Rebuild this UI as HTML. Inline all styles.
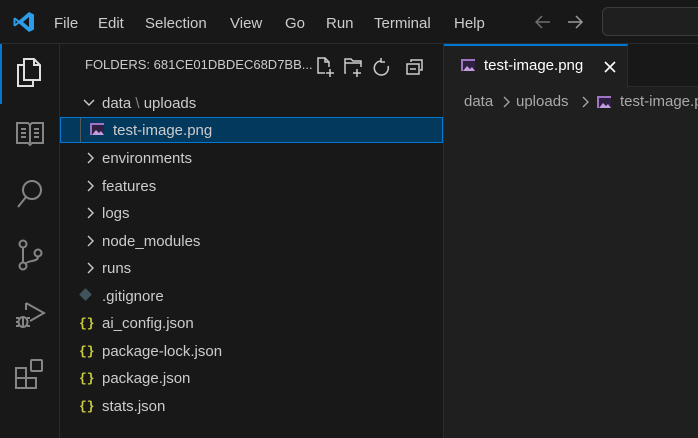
<!DOCTYPE html>
<html><head><meta charset="utf-8"><style>
*{margin:0;padding:0;box-sizing:border-box}
body{width:698px;height:438px;background:#1f1f1f;font-family:"Segoe UI","Liberation Sans",sans-serif;color:#cccccc;overflow:hidden;position:relative;font-size:15px}
.abs{position:absolute}
#title{left:0;top:0;width:698px;height:44px;background:#181818;border-bottom:1px solid #2b2b2b}
.menu{top:15px;font-size:15px;color:#cccccc}
#act{left:0;top:44px;width:60px;height:394px;background:#181818;border-right:1px solid #2b2b2b}
#side{left:60px;top:44px;width:384px;height:394px;background:#181818;border-right:1px solid #2b2b2b}
#tabs{left:444px;top:44px;width:254px;height:43px;background:#181818;border-bottom:1px solid #2b2b2b}
#tab{left:444px;top:44px;width:184px;height:44px;background:#1f1f1f;border-top:2px solid #0078d4;border-right:1px solid #2b2b2b}
.row{position:absolute;left:60px;width:383px;height:26px;line-height:29px;color:#cccccc}
.row span{position:absolute}
.jb{left:19px;top:0;color:#cbcb41;font-weight:bold;font-size:13px;font-family:"Liberation Mono",monospace;letter-spacing:0px}
svg{position:absolute}
.cv{left:27px;top:8px}
</style></head><body>
<div id="title" class="abs"></div>
<svg style="left:12px;top:10px" width="24" height="24" viewBox="0 0 24 24"><path d="M17 2 L22 4.5 V19.5 L17 22 L7 13.5 L3 16.5 L1.5 15.5 V8.5 L3 7.5 L7 10.5 Z M17 7 L11 12 L17 17 Z M3.5 10 V14 L5.5 12 Z" fill="#2a9ee8"/></svg>
<div class="abs menu" style="left:54px">File</div>
<div class="abs menu" style="left:98px">Edit</div>
<div class="abs menu" style="left:145px">Selection</div>
<div class="abs menu" style="left:230px">View</div>
<div class="abs menu" style="left:285px">Go</div>
<div class="abs menu" style="left:326px">Run</div>
<div class="abs menu" style="left:374px">Terminal</div>
<div class="abs menu" style="left:454px">Help</div>
<svg style="left:535px;top:14px" width="50" height="16" viewBox="0 0 50 16" fill="none" stroke-width="1.5"><path d="M1 8 H15 M7 2 L1 8 L7 14" stroke="#6f6f6f"/><path d="M33 8 H47 M41 2 L47 8 L41 14" stroke="#9a9a9a"/></svg>
<div class="abs" style="left:602px;top:7px;width:110px;height:29px;border:1px solid #3c3c3c;border-radius:6px;background:#1f1f1f"></div>

<div id="act" class="abs"></div>
<div class="abs" style="left:0;top:44px;width:2px;height:60px;background:#0078d4"></div>
<svg style="left:15px;top:56px" width="30" height="32" viewBox="0 0 30 32" fill="none" stroke="#e0e0e0" stroke-width="2"><path d="M9 3 H19 L25 9 V24 H9 Z M19 3 V9 H25"/><path d="M9 9 H3 V30 H18 V24"/></svg>
<svg style="left:16px;top:121px" width="28" height="26" viewBox="0 0 28 26" fill="none" stroke="#858585" stroke-width="2"><path d="M1 2 H12 L14 4 L16 2 H27 V22 H16 L14 24 L12 22 H1 Z M14 4 V22 M5 8H10 M5 12H10 M5 16H10 M18 8H23 M18 12H23 M18 16H23"/></svg>
<svg style="left:16px;top:178px" width="28" height="32" viewBox="0 0 28 32" fill="none" stroke="#858585" stroke-width="2"><circle cx="16" cy="12" r="9"/><path d="M10 19 L2 29"/></svg>
<svg style="left:16px;top:238px" width="28" height="34" viewBox="0 0 28 34" fill="none" stroke="#858585" stroke-width="2"><circle cx="7" cy="6" r="3.5"/><circle cx="7" cy="28" r="3.5"/><circle cx="22" cy="15" r="3.5"/><path d="M7 10 V24 M22 19 C22 24 12 22 9 26"/></svg>
<svg style="left:14px;top:298px" width="32" height="32" viewBox="0 0 32 32" fill="none" stroke="#858585" stroke-width="2"><path d="M12 5 L30 15 L16 23"/><path d="M12 5 V12"/><ellipse cx="9" cy="24" rx="4.5" ry="5"/><path d="M2 20H5 M2 24H5 M2 28H5 M13 20H16 M13 28H16 M9 19 V29"/></svg>
<svg style="left:14px;top:358px" width="32" height="32" viewBox="0 0 32 32" fill="none" stroke="#858585" stroke-width="2"><path d="M2 10 H12 V20 H22 V30 H2 Z M2 20 H12 V30"/><rect x="17" y="2" width="11" height="11" rx="1"/></svg>

<div id="side" class="abs"></div>
<div class="abs" style="left:85px;top:57px;font-size:13px;color:#cccccc">FOLDERS: 681CE01DBDEC68D7BB...</div>
<svg style="left:316px;top:56px" width="110" height="22" viewBox="0 0 110 22" fill="none" stroke="#cccccc" stroke-width="1.5"><path d="M9 17 H2 V2 H9 L13 6 V11 M9 2 V6 H13 M14 13 V21 M10 17 H18"/><path d="M30 17 H29 V3 H35 L37 5 H45 V11 M29 7 H45 M41 13 V21 M37 17 H45"/><path d="M65 5 A7 7 0 1 0 72 10 M65 2 V6 H69"/><path d="M95 6 V4 H106 V14 H104 M91 8 H103 V18 H91 Z M94 13 H100"/></svg>

<div class="row" style="top:89px"><svg style="left:23px;top:10px" width="12" height="8" viewBox="0 0 12 8" fill="none" stroke="#cccccc" stroke-width="1.4"><path d="M1 1 L6 6 L11 1"/></svg><span style="left:42px">data<span style="position:static;color:#888"> \ </span>uploads</span></div>
<div class="row" style="top:117px;background:#04395e;border:1px solid #0078d4;left:60px;width:383px;height:26px;line-height:26px"><span style="left:19px;top:0;width:1px;height:24px;background:#585858"></span>
<svg style="left:29px;top:5px" width="16" height="14" viewBox="0 0 16 14"><rect x="0" y="0" width="14" height="12" fill="#a074c4"/><rect x="2" y="2" width="12" height="10" fill="#2d2040"/><path d="M2 12 L6 7 L9 10 L11 8 L14 12 Z" fill="#c39be0"/></svg>
<span style="left:52px">test-image.png</span></div>
<div class="row" style="top:144px"><svg class="cv" width="8" height="12" viewBox="0 0 8 12" fill="none" stroke="#cccccc" stroke-width="1.4"><path d="M1 1 L6 6 L1 11"/></svg><span style="left:42px">environments</span></div>
<div class="row" style="top:172px"><svg class="cv" width="8" height="12" viewBox="0 0 8 12" fill="none" stroke="#cccccc" stroke-width="1.4"><path d="M1 1 L6 6 L1 11"/></svg><span style="left:42px">features</span></div>
<div class="row" style="top:199px"><svg class="cv" width="8" height="12" viewBox="0 0 8 12" fill="none" stroke="#cccccc" stroke-width="1.4"><path d="M1 1 L6 6 L1 11"/></svg><span style="left:42px">logs</span></div>
<div class="row" style="top:227px"><svg class="cv" width="8" height="12" viewBox="0 0 8 12" fill="none" stroke="#cccccc" stroke-width="1.4"><path d="M1 1 L6 6 L1 11"/></svg><span style="left:42px">node_modules</span></div>
<div class="row" style="top:254px"><svg class="cv" width="8" height="12" viewBox="0 0 8 12" fill="none" stroke="#cccccc" stroke-width="1.4"><path d="M1 1 L6 6 L1 11"/></svg><span style="left:42px">runs</span></div>
<div class="row" style="top:282px"><span style="left:21px;top:8px;width:9px;height:9px;background:#41535b;transform:rotate(45deg)"></span><span style="left:42px">.gitignore</span></div>
<div class="row" style="top:309px"><span class="jb">{}</span><span style="left:42px">ai_config.json</span></div>
<div class="row" style="top:337px"><span class="jb">{}</span><span style="left:42px">package-lock.json</span></div>
<div class="row" style="top:364px"><span class="jb">{}</span><span style="left:42px">package.json</span></div>
<div class="row" style="top:392px"><span class="jb">{}</span><span style="left:42px">stats.json</span></div>

<div id="tabs" class="abs"></div>
<div id="tab" class="abs"></div>
<svg style="left:461px;top:59px" width="16" height="14" viewBox="0 0 16 14"><rect x="0" y="0" width="14" height="12" fill="#a074c4"/><rect x="2" y="2" width="12" height="10" fill="#2d2040"/><path d="M2 12 L6 7 L9 10 L11 8 L14 12 Z" fill="#c39be0"/></svg>
<div class="abs" style="left:484px;top:57px;color:#ffffff">test-image.png</div>
<svg style="left:604px;top:61px" width="12" height="12" viewBox="0 0 12 12" fill="none" stroke="#ffffff" stroke-width="1.6"><path d="M1 1 L11 11 M11 1 L1 11"/></svg>
<div class="abs" style="left:464px;top:93px;color:#a9a9a9">data</div>
<svg style="left:503px;top:96px" width="7" height="12" viewBox="0 0 7 12" fill="none" stroke="#a9a9a9" stroke-width="1.3"><path d="M1 1 L6 6 L1 11"/></svg>
<div class="abs" style="left:516px;top:93px;color:#a9a9a9">uploads</div>
<svg style="left:582px;top:96px" width="7" height="12" viewBox="0 0 7 12" fill="none" stroke="#a9a9a9" stroke-width="1.3"><path d="M1 1 L6 6 L1 11"/></svg>
<svg style="left:597px;top:96px" width="16" height="14" viewBox="0 0 16 14"><rect x="0" y="0" width="14" height="12" fill="#a074c4"/><rect x="2" y="2" width="12" height="10" fill="#2d2040"/><path d="M2 12 L6 7 L9 10 L11 8 L14 12 Z" fill="#c39be0"/></svg>
<div class="abs" style="left:620px;top:93px;color:#a9a9a9;white-space:nowrap">test-image.png</div>
</body></html>
